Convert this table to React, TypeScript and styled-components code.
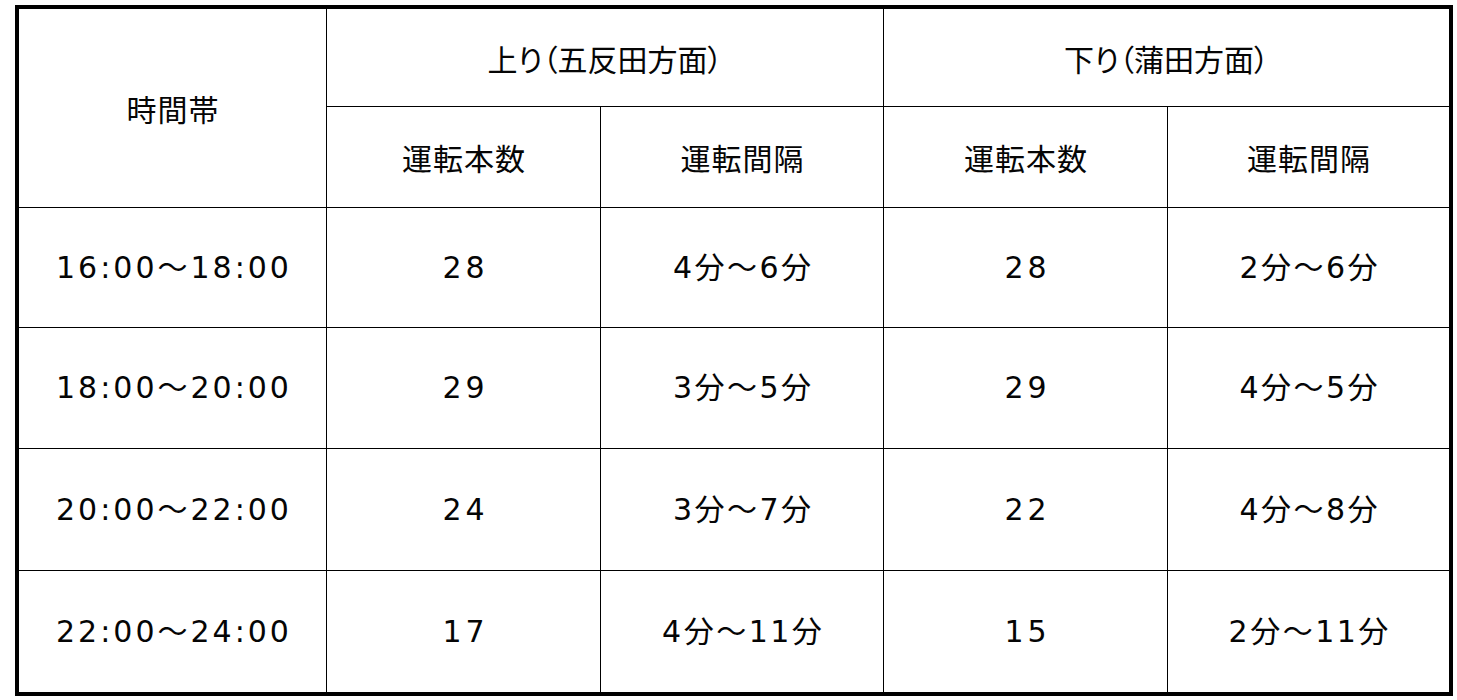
import React from "react";
import styled, { createGlobalStyle } from "styled-components";

const GlobalStyle = createGlobalStyle`
  html, body {
    margin: 0;
    padding: 0;
    background: #ffffff;
  }
  body {
    font-family: "Noto Sans CJK JP", sans-serif;
    color: #000000;
  }
`;

const Page = styled.div`
  padding: 5px 0 0 15px;
`;

const Table = styled.table`
  width: 1438px;
  table-layout: fixed;
  border-collapse: separate;
  border-spacing: 0;
  border: 4px solid #000;
  box-sizing: border-box;
`;

const Row = styled.tr<{ $h: number }>`
  height: ${(p) => p.$h}px;

  &:last-child > td {
    border-bottom: none;
  }
`;

const Cell = styled.td<{ $spacing?: number; $numeric?: boolean }>`
  box-sizing: border-box;
  padding: 0 0 0 ${(p) => p.$spacing ?? 0}px;
  border-right: 1px solid #000;
  border-bottom: 1px solid #000;
  text-align: center;
  vertical-align: middle;
  font-family: ${(p) =>
    p.$numeric
      ? `"DejaVu Sans", "Noto Sans CJK JP", sans-serif`
      : `"Noto Sans CJK JP", sans-serif`};
  font-feature-settings: "palt" 1;
  font-size: 30px;
  line-height: 1.2;
  font-weight: 400;
  letter-spacing: ${(p) => p.$spacing ?? 0}px;
  white-space: nowrap;
  color: #050505;

  &:last-child {
    border-right: none;
  }
`;

const columns = [308, 274, 283, 284, 281];

const rows: string[][] = [
  ["16:00〜18:00", "28", "4分〜6分", "28", "2分〜6分"],
  ["18:00〜20:00", "29", "3分〜5分", "29", "4分〜5分"],
  ["20:00〜22:00", "24", "3分〜7分", "22", "4分〜8分"],
  ["22:00〜24:00", "17", "4分〜11分", "15", "2分〜11分"],
];

const rowHeights = [120, 121, 122, 121];

// letter spacing per column: time, count, interval, count, interval
const spacing = [3, 4, 2.5, 4, 2.5];

export default function App() {
  return (
    <>
      <GlobalStyle />
      <Page>
        <Table>
          <colgroup>
            {columns.map((w, i) => (
              <col key={i} style={{ width: w }} />
            ))}
          </colgroup>
          <tbody>
            <Row $h={98}>
              <Cell rowSpan={2} $spacing={1}>時間帯</Cell>
              <Cell colSpan={2}>上り（五反田方面）</Cell>
              <Cell colSpan={2}>下り（蒲田方面）</Cell>
            </Row>
            <Row $h={101}>
              <Cell $spacing={1}>運転本数</Cell>
              <Cell $spacing={1}>運転間隔</Cell>
              <Cell $spacing={1}>運転本数</Cell>
              <Cell $spacing={1}>運転間隔</Cell>
            </Row>
            {rows.map((r, i) => (
              <Row key={i} $h={rowHeights[i]}>
                {r.map((v, j) => (
                  <Cell key={j} $numeric $spacing={spacing[j]}>
                    {v}
                  </Cell>
                ))}
              </Row>
            ))}
          </tbody>
        </Table>
      </Page>
    </>
  );
}
